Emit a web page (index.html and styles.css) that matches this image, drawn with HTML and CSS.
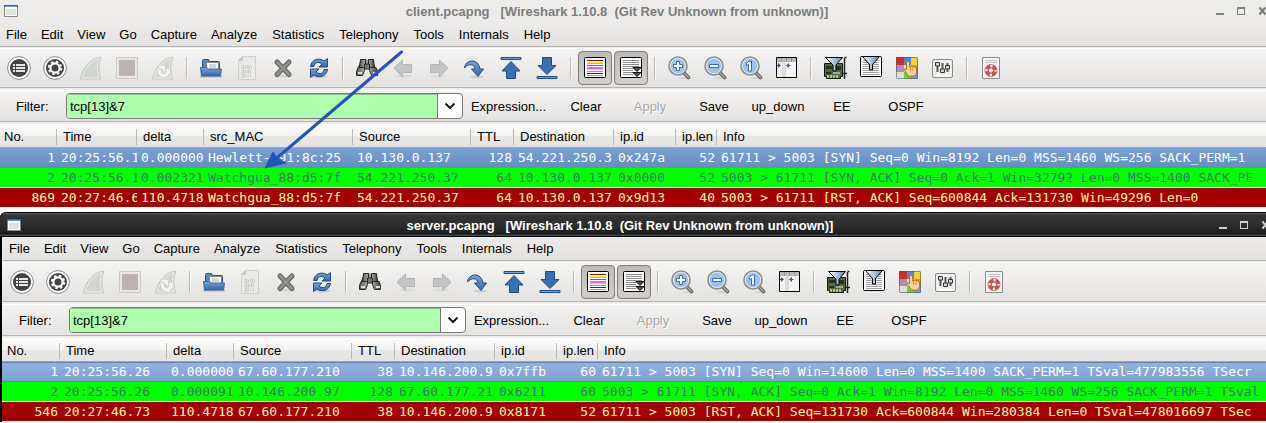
FILE: index.html
```html
<!DOCTYPE html>
<html lang="en">
<head>
<meta charset="utf-8">
<title>Wireshark captures</title>
<link rel="stylesheet" href="styles.css">
</head>
<body>
<svg class="defs" aria-hidden="true">
  <defs>
    <linearGradient id="g-blue" x1="0" y1="0" x2="0" y2="1"><stop offset="0" stop-color="#7ba4d6"/><stop offset="1" stop-color="#3465a4"/></linearGradient>
    <linearGradient id="g-funnel" x1="0" y1="0" x2="1" y2="0"><stop offset="0" stop-color="#fff"/><stop offset="1" stop-color="#5f86b8"/></linearGradient>
    <linearGradient id="g-tube" x1="0" y1="0" x2="1" y2="0"><stop offset="0" stop-color="#555753"/><stop offset=".5" stop-color="#c5c7c2"/><stop offset="1" stop-color="#3c3e3a"/></linearGradient>
    <symbol id="i-app" viewBox="0 0 14 12"><path d="M.5 .5h13v11H.5z" fill="#fff" stroke="#858583"/><path d="M2 4h10v6H2z" fill="#dfe2dc"/><path d="M0 0h14v2H0z" fill="#3a65a3"/><path d="M1 1h12v1H1z" fill="#6d9ad6"/></symbol>
    <symbol id="i-min" viewBox="0 0 8 10"><path d="M0 7h8v2H0z" fill="currentColor"/></symbol>
    <symbol id="i-max" viewBox="0 0 8 10"><path d="M0 1h8v8H0zM1 3v5h6V3z" fill="currentColor" fill-rule="evenodd"/></symbol>
    <symbol id="i-close" viewBox="0 0 10 10"><path d="M1.500 1.500l6 7M7.500 1.500l-6 7" stroke="currentColor" stroke-width="2.200"/></symbol>
    <symbol id="i-list" viewBox="0 0 24 24"><circle cx="12" cy="12" r="11.400" fill="#fff" stroke="#85878a"/><circle cx="12" cy="12" r="9" fill="#414344"/><path d="M6 8h2v2H6zM6 11h2v2H6zM6 14h2v2H6zM9 8h9v2H9zM9 11h9v2H9zM9 14h9v2H9z" fill="#e8e8e8"/></symbol>
    <symbol id="i-gear" viewBox="0 0 24 24"><circle cx="12" cy="12" r="11.400" fill="#fff" stroke="#85878a"/><circle cx="12" cy="12" r="9" fill="#414344"/><circle cx="12" cy="12" r="4.600" fill="none" stroke="#fff" stroke-width="2.200"/><circle cx="12" cy="12" r="6.200" fill="none" stroke="#fff" stroke-width="2" stroke-dasharray="2.600 2.270"/></symbol>
    <symbol id="i-fin" viewBox="0 0 24 24"><path d="M1.500 23C4 12 10 2.500 22 1.200C18.500 8 20 17 21.500 23z" fill="#d0d5ce" stroke="#c6c7c4"/><path d="M3 22C6 12 11 4.500 20 2.500C17.500 9 18.500 17 20 22z" fill="none" stroke="#efefed"/></symbol>
    <symbol id="i-stop" viewBox="0 0 24 24"><path d="M1.500 1.500h21v21h-21z" fill="#e9e8e6" stroke="#cccac8"/><path d="M4 4h16v16H4z" fill="#bdb3b1"/></symbol>
    <symbol id="i-restart" viewBox="0 0 24 24"><use href="#i-fin"/><path d="M9 13.500a4.200 4.200 0 1 0 7-.5" fill="none" stroke="#f4f4f2" stroke-width="2.600"/><path d="M7 10h7v6z" fill="#f4f4f2"/></symbol>
    <symbol id="i-open" viewBox="0 0 24 24"><path d="M1 20h22v1.500H1z" fill="#b9b8b5"/><path d="M3.500 13V4.500q0-1 1-1h5l1 2h9q1 0 1 1V13z" fill="#5c86bf" stroke="#274f88"/><path d="M7.500 6.500h12v7h-12z" fill="#fff" stroke="#888a85"/><path d="M10 9h7M10 11h7" stroke="#a9aca6"/><path d="M1.500 11.500h6l1.500 1.500h13.500l-1 7h-19z" fill="url(#g-blue)" stroke="#3a67a5"/></symbol>
    <symbol id="i-file" viewBox="0 0 24 24"><path d="M3.500 4l4-3.500h13v23h-17z" fill="#e9eae7" stroke="#cfd0cd"/><path d="M3 5h5V0z" fill="#c6c8c4"/><path d="M7 9.500h2v3H7zm3.500 0v3m2-3h2v3h-2zm4 0v3M7 14v3.500m1.500-3.500h2v3h-2zm3.500 0v3m1.500-3h2v3h-2zM7 18.500h2v3H7zm3.500 0v3m2.500-3v3m2.500-3v3" fill="none" stroke="#c9cbc7"/></symbol>
    <symbol id="i-cross" viewBox="0 0 24 24"><ellipse cx="12" cy="20" rx="9" ry="1.500" fill="#d5d4d2"/><path d="M6 6L18 18.500M18 6L6 18.500" stroke="#5d5f5c" stroke-width="5" stroke-linecap="round"/><path d="M6 6L18 18.500M18 6L6 18.500" stroke="#8f918d" stroke-width="3" stroke-linecap="round"/></symbol>
    <symbol id="i-reload" viewBox="0 0 24 24"><ellipse cx="12" cy="21" rx="9" ry="1.500" fill="#cfcecb"/><path d="M3.500 10.500C4.500 3.500 12 1 17 5l3.500-2.500V11h-8.500l3-3C11 5 7.500 6.500 7 10.500z" fill="url(#g-blue)" stroke="#204a87"/><path d="M20.500 13.500C19.500 20.500 12 22.500 7 19l-3.500 2.500V13h8.500l-3 3c4 3 7.500 1.500 8-2.500z" fill="url(#g-blue)" stroke="#204a87"/></symbol>
    <symbol id="i-find" viewBox="0 0 24 24"><path d="M5.500 5h3v-1.500h3V10h1V3.500h3V5h3l1.500 6h-17z" fill="#4b4d49"/><path d="M5.500 3.500h5v9h-6zM13.500 3.500h5l1 9h-6z" fill="url(#g-tube)" stroke="#252724"/><path d="M3 11.500h6.500v3l-2 5H1.500v-4zM21 11.500h-6.500v3l2 5h6v-4z" fill="url(#g-tube)" stroke="#252724"/><path d="M9.500 8h5v5h-5z" fill="#777a74" stroke="#252724"/><path d="M3 16h4v2H3zM18 16h4v2h-4z" fill="#dcded9"/></symbol>
    <symbol id="i-back" viewBox="0 0 24 24"><ellipse cx="13" cy="20" rx="8" ry="1.500" fill="#dcdbd8"/><path d="M3 12l8.500-8v4.500h9v8h-9V21z" fill="#c3c4c3" stroke="#b4b6b5"/></symbol>
    <symbol id="i-fwd" viewBox="0 0 24 24"><ellipse cx="11" cy="20" rx="8" ry="1.500" fill="#dcdbd8"/><path d="M21 12l-8.500-8v4.500h-9v8h9V21z" fill="#c3c4c3" stroke="#b4b6b5"/></symbol>
    <symbol id="i-jump" viewBox="0 0 24 24"><ellipse cx="14" cy="21" rx="7" ry="1.300" fill="#cfcecb"/><path d="M1.500 12C2 3.500 15.500 1.500 17 13h3.500L15 20.500 8.500 13H12C11.500 8 5.500 7 1.500 12z" fill="url(#g-blue)" stroke="#204a87"/></symbol>
    <symbol id="i-top" viewBox="0 0 24 24"><path d="M2 1.500h20v2H2z" fill="#7ba4d6" stroke="#204a87"/><path d="M12 5.500l9 9.500h-4.500v7.500h-9V15H3z" fill="#3a6fb0" stroke="#204a87"/></symbol>
    <symbol id="i-bottom" viewBox="0 0 24 24"><path d="M2 20.500h20v2H2z" fill="#7ba4d6" stroke="#204a87"/><path d="M12 18.500L3 9.500h4.500v-8h9v8H21z" fill="#3a6fb0" stroke="#204a87"/></symbol>
    <symbol id="i-color" viewBox="0 0 24 24"><rect x="1.500" y="1.500" width="21" height="20" rx="1" fill="#fff" stroke="#000"/><g stroke-width="1"><path d="M4 4.500h16" stroke="#8f1010"/><path d="M4 6.500h16" stroke="#f5e642"/><path d="M4 7.500h16" stroke="#70ef50"/><path d="M4 9.500h16" stroke="#5b55dd"/><path d="M4 11.500h16" stroke="#40c8a8"/><path d="M4 12.500h16" stroke="#ee62e4" stroke-width="2"/><path d="M4 15.500h16" stroke="#ee62e4"/><path d="M4 17.500h16" stroke="#7c1010"/><path d="M4 19.500h16" stroke="#37cadf"/></g></symbol>
    <symbol id="i-scroll" viewBox="0 0 24 24"><rect x="1.500" y="1.500" width="21" height="20" rx="1" fill="#fff" stroke="#000"/><path d="M4 4.500h16M4 6.500h16M4 8.500h16M4 10.500h16M4 12.500h10M4 14.500h10M4 16.500h11M4 18.500h10" stroke="#8b8b8b"/><path d="M14 11.500h8l-4 4zM14 16.500h8l-4 4z" fill="#555" stroke="#000"/></symbol>
    <symbol id="i-lens" viewBox="0 0 24 24"><ellipse cx="17" cy="22" rx="6" ry="1.200" fill="#d5d4d1"/><path d="M16 16l5.500 5.500" stroke="#5c5e5a" stroke-width="3.600" stroke-linecap="round"/><path d="M16 16l5.500 5.500" stroke="#a8aaa5" stroke-width="1.600" stroke-linecap="round"/><circle cx="11" cy="10" r="9" fill="#9ebfe8" stroke="#8b8d88" stroke-width="1.600"/><circle cx="11" cy="10" r="7.700" fill="none" stroke="#e4ecf6"/></symbol>
    <symbol id="i-zin" viewBox="0 0 24 24"><use href="#i-lens"/><path d="M9.500 5.500h3v3h3v3h-3v3h-3v-3h-3v-3h3z" fill="#fff" stroke="#3b6dab"/></symbol>
    <symbol id="i-zout" viewBox="0 0 24 24"><use href="#i-lens"/><path d="M6.500 8.500h9v3h-9z" fill="#fff" stroke="#3b6dab"/></symbol>
    <symbol id="i-zone" viewBox="0 0 24 24"><use href="#i-lens"/><path d="M7.500 7.500L10 5h2.500v10h-3V8.500l-2 1z" fill="#fff" stroke="#3b6dab"/></symbol>
    <symbol id="i-resize" viewBox="0 0 24 24"><path d="M1.500 1.500h20v20h-20z" fill="#f4f4f2" stroke="#000"/><path d="M2 2h19v4H2z" fill="#bababa"/><path d="M7 6h4v15H7z" fill="#deddda"/><path d="M6.500 2v4M11.500 2v4M16.500 2v4" stroke="#929292"/><path d="M2 9.500h3M12.500 9.500h3" stroke="#34587e"/><path d="M3 7l3 2.500L3 12zM14 7v5l-3-2.500z" fill="#34587e"/></symbol>
    <symbol id="i-capfilter" viewBox="0 0 24 24"><path d="M1.500 7.500h18v13h-2v2h-14v-2h-2z" fill="#536849" stroke="#10180d"/><path d="M4 20.500h12" stroke="#d7c679" stroke-width="2.500" stroke-dasharray="2 1"/><path d="M3 10h6v3H3zM13 10h5v4h-5zM3 16h5v2H3z" fill="#26311f"/><path d="M10 16h7v2h-7z" fill="#9aaf82"/><path d="M21.500 2v21M21.500 1.500h2M20 17.500h4" stroke="#20221f" stroke-width="1.500"/><path d="M2.500 1.500h17L13 9v6h-3V9z" fill="url(#g-funnel)" stroke="#000"/></symbol>
    <symbol id="i-dispfilter" viewBox="0 0 24 24"><rect x="1.500" y=".5" width="21" height="20" rx="1" fill="#fff" stroke="#000"/><path d="M4 4.500h16M4 6.500h16M4 8.500h16M4 10.500h16M4 12.500h16M4 14.500h16M4 16.500h16M4 18.500h16" stroke="#a0a0a0"/><path d="M3.500 .5h17L13.500 8.500v5.500h-3V8.500z" fill="url(#g-funnel)" stroke="#000"/></symbol>
    <symbol id="i-palette" viewBox="0 0 24 24"><path d="M1 1h8v8H1z" fill="#d42a2a"/><path d="M9 1h7v8H9z" fill="#5487c4"/><path d="M16 1h7v8h-7z" fill="#efd53a"/><path d="M1 9h8v7H1z" fill="#b28bb4"/><path d="M9 9h7v7H9z" fill="#e4e4df"/><path d="M16 9h7v7h-7z" fill="#e98a35"/><path d="M1 16h8v7H1z" fill="#dedfdc"/><path d="M9 16h7v7H9z" fill="#75cc37"/><path d="M16 16h7v7h-7z" fill="#6c9fda"/><rect x="1.500" y="1.500" width="21" height="21" rx="1" fill="none" stroke="#555" stroke-opacity=".6"/><path d="M11.500 6q1.500-1.500 3 0v5l1.500-1 1.500 1 1.500-.5 1 1 1 0 .5 1.500v4l-2 3h-6L10 15q-1.500-2.500 0-2.500l1.500 1z" fill="#f8d397" stroke="#b47224"/><path d="M15.500 11.500v3M18 12v3" stroke="#c98a3e"/></symbol>
    <symbol id="i-prefs" viewBox="0 0 24 24"><rect x="1.500" y="3.500" width="20" height="18" rx="1.500" fill="#eeefec" stroke="#888a85"/><path d="M3 19h17v1.500H3z" fill="#fff"/><path d="M6.500 7v9M11.500 7v9M16.500 7v9" stroke="#555753" stroke-width="2"/><path d="M4.500 6.500h4v3.500h-4zM9.500 13h4v3.500h-4zM14.500 9.500h4V13h-4z" fill="#d3d5d0" stroke="#2e3436"/></symbol>
    <symbol id="i-help" viewBox="0 0 24 24"><path d="M3.500 1.500h17v21h-17z" fill="#f4f4f2" stroke="#898b86"/><path d="M6 4.500h12M6 6.500h12" stroke="#c2c3c0"/><circle cx="12" cy="14.500" r="4.500" fill="none" stroke="#f2f2f0" stroke-width="3"/><circle cx="12" cy="14.500" r="4.500" fill="none" stroke="#d44a4a" stroke-width="2.800" stroke-dasharray="4.800 2.270" stroke-dashoffset="-1.100"/><circle cx="12" cy="14.500" r="2.700" fill="#f6f6f4" stroke="#a33"/><circle cx="12" cy="14.500" r="6" fill="none" stroke="#b55" stroke-width=".8"/></symbol>
    <symbol id="i-down" viewBox="0 0 12 8"><path d="M1.500 1.500L6 6l4.500-4.500" fill="none" stroke="#1a1a1a" stroke-width="2"/></symbol>
  </defs>
</svg>

<section class="window client">
  <header class="top">
    <div class="titlebar">
      <svg class="app"><use href="#i-app"/></svg>
      <h1 class="title">client.pcapng   [Wireshark 1.10.8  (Git Rev Unknown from unknown)]</h1>
      <button class="ctl" aria-label="Minimize"><svg><use href="#i-min"/></svg></button>
      <button class="ctl" aria-label="Maximize"><svg><use href="#i-max"/></svg></button>
      <button class="ctl close" aria-label="Close"><svg><use href="#i-close"/></svg></button>
    </div>
    <nav class="menu">
      <button>File</button><button>Edit</button><button>View</button><button>Go</button><button>Capture</button><button>Analyze</button><button>Statistics</button><button>Telephony</button><button>Tools</button><button>Internals</button><button>Help</button>
    </nav>
  </header>
  <div class="toolbar">
    <button aria-label="Interfaces"><svg><use href="#i-list"/></svg></button>
    <button aria-label="Options"><svg><use href="#i-gear"/></svg></button>
    <button aria-label="Start" disabled><svg><use href="#i-fin"/></svg></button>
    <button aria-label="Stop" disabled><svg><use href="#i-stop"/></svg></button>
    <button aria-label="Restart" disabled><svg><use href="#i-restart"/></svg></button>
    <span class="sep"></span>
    <button aria-label="Open"><svg><use href="#i-open"/></svg></button>
    <button aria-label="Save" disabled><svg><use href="#i-file"/></svg></button>
    <button aria-label="Close file"><svg><use href="#i-cross"/></svg></button>
    <button aria-label="Reload"><svg><use href="#i-reload"/></svg></button>
    <span class="sep"></span>
    <button aria-label="Find"><svg><use href="#i-find"/></svg></button>
    <button aria-label="Back" disabled><svg><use href="#i-back"/></svg></button>
    <button aria-label="Forward" disabled><svg><use href="#i-fwd"/></svg></button>
    <button aria-label="Go to packet"><svg><use href="#i-jump"/></svg></button>
    <button aria-label="First packet"><svg><use href="#i-top"/></svg></button>
    <button aria-label="Last packet"><svg><use href="#i-bottom"/></svg></button>
    <span class="sep"></span>
    <button class="on" aria-label="Colorize" aria-pressed="true"><svg><use href="#i-color"/></svg></button>
    <button class="on" aria-label="Auto scroll" aria-pressed="true"><svg><use href="#i-scroll"/></svg></button>
    <span class="sep"></span>
    <button aria-label="Zoom in"><svg><use href="#i-zin"/></svg></button>
    <button aria-label="Zoom out"><svg><use href="#i-zout"/></svg></button>
    <button aria-label="Normal size"><svg><use href="#i-zone"/></svg></button>
    <button aria-label="Resize columns"><svg><use href="#i-resize"/></svg></button>
    <span class="sep"></span>
    <button aria-label="Capture filters"><svg><use href="#i-capfilter"/></svg></button>
    <button aria-label="Display filters"><svg><use href="#i-dispfilter"/></svg></button>
    <button aria-label="Coloring rules"><svg><use href="#i-palette"/></svg></button>
    <button aria-label="Preferences"><svg><use href="#i-prefs"/></svg></button>
    <span class="sep"></span>
    <button aria-label="Help contents"><svg><use href="#i-help"/></svg></button>
  </div>
  <form class="filter">
    <label for="filter-client">Filter:</label>
    <div class="combo"><input id="filter-client" type="text" value="tcp[13]&amp;7"><button type="button" aria-label="Recent filters"><svg><use href="#i-down"/></svg></button></div>
    <button type="button" class="action expr">Expression...</button><button type="button" class="action">Clear</button><button type="button" class="action" disabled>Apply</button><button type="button" class="action">Save</button><button type="button" class="action">up_down</button><button type="button" class="action">EE</button><button type="button" class="action">OSPF</button>
  </form>
  <table class="packets">
    <colgroup><col class="c-no"><col class="c-time"><col class="c-delta"><col class="c-mac"><col class="c-src"><col class="c-ttl"><col class="c-dst"><col class="c-id"><col class="c-len"><col></colgroup>
    <thead><tr><th>No.</th><th>Time</th><th>delta</th><th>src_MAC</th><th>Source</th><th>TTL</th><th>Destination</th><th>ip.id</th><th>ip.len</th><th>Info</th></tr></thead>
    <tbody>
      <tr class="selected"><td class="num">1</td><td>20:25:56.1</td><td>0.000000</td><td>Hewlett-_91:8c:25</td><td>10.130.0.137</td><td class="num">128</td><td>54.221.250.3</td><td>0x247a</td><td class="num">52</td><td>61711 &gt; 5003 [SYN] Seq=0 Win=8192 Len=0 MSS=1460 WS=256 SACK_PERM=1</td></tr>
      <tr class="syn"><td class="num">2</td><td>20:25:56.1</td><td>0.002321</td><td>Watchgua_88:d5:7f</td><td>54.221.250.37</td><td class="num">64</td><td>10.130.0.137</td><td>0x0000</td><td class="num">52</td><td>5003 &gt; 61711 [SYN, ACK] Seq=0 Ack=1 Win=32792 Len=0 MSS=1400 SACK_PE</td></tr>
      <tr class="rst"><td class="num">869</td><td>20:27:46.6</td><td>110.4718</td><td>Watchgua_88:d5:7f</td><td>54.221.250.37</td><td class="num">64</td><td>10.130.0.137</td><td>0x9d13</td><td class="num">40</td><td>5003 &gt; 61711 [RST, ACK] Seq=600844 Ack=131730 Win=49296 Len=0</td></tr>
    </tbody>
  </table>
</section>

<section class="window server">
  <header class="top">
    <div class="titlebar">
      <svg class="app"><use href="#i-app"/></svg>
      <h1 class="title">server.pcapng   [Wireshark 1.10.8  (Git Rev Unknown from unknown)]</h1>
      <button class="ctl" aria-label="Minimize"><svg><use href="#i-min"/></svg></button>
      <button class="ctl" aria-label="Maximize"><svg><use href="#i-max"/></svg></button>
      <button class="ctl close" aria-label="Close"><svg><use href="#i-close"/></svg></button>
    </div>
    <nav class="menu">
      <button>File</button><button>Edit</button><button>View</button><button>Go</button><button>Capture</button><button>Analyze</button><button>Statistics</button><button>Telephony</button><button>Tools</button><button>Internals</button><button>Help</button>
    </nav>
  </header>
  <div class="toolbar">
    <button aria-label="Interfaces"><svg><use href="#i-list"/></svg></button>
    <button aria-label="Options"><svg><use href="#i-gear"/></svg></button>
    <button aria-label="Start" disabled><svg><use href="#i-fin"/></svg></button>
    <button aria-label="Stop" disabled><svg><use href="#i-stop"/></svg></button>
    <button aria-label="Restart" disabled><svg><use href="#i-restart"/></svg></button>
    <span class="sep"></span>
    <button aria-label="Open"><svg><use href="#i-open"/></svg></button>
    <button aria-label="Save" disabled><svg><use href="#i-file"/></svg></button>
    <button aria-label="Close file"><svg><use href="#i-cross"/></svg></button>
    <button aria-label="Reload"><svg><use href="#i-reload"/></svg></button>
    <span class="sep"></span>
    <button aria-label="Find"><svg><use href="#i-find"/></svg></button>
    <button aria-label="Back" disabled><svg><use href="#i-back"/></svg></button>
    <button aria-label="Forward" disabled><svg><use href="#i-fwd"/></svg></button>
    <button aria-label="Go to packet"><svg><use href="#i-jump"/></svg></button>
    <button aria-label="First packet"><svg><use href="#i-top"/></svg></button>
    <button aria-label="Last packet"><svg><use href="#i-bottom"/></svg></button>
    <span class="sep"></span>
    <button class="on" aria-label="Colorize" aria-pressed="true"><svg><use href="#i-color"/></svg></button>
    <button class="on" aria-label="Auto scroll" aria-pressed="true"><svg><use href="#i-scroll"/></svg></button>
    <span class="sep"></span>
    <button aria-label="Zoom in"><svg><use href="#i-zin"/></svg></button>
    <button aria-label="Zoom out"><svg><use href="#i-zout"/></svg></button>
    <button aria-label="Normal size"><svg><use href="#i-zone"/></svg></button>
    <button aria-label="Resize columns"><svg><use href="#i-resize"/></svg></button>
    <span class="sep"></span>
    <button aria-label="Capture filters"><svg><use href="#i-capfilter"/></svg></button>
    <button aria-label="Display filters"><svg><use href="#i-dispfilter"/></svg></button>
    <button aria-label="Coloring rules"><svg><use href="#i-palette"/></svg></button>
    <button aria-label="Preferences"><svg><use href="#i-prefs"/></svg></button>
    <span class="sep"></span>
    <button aria-label="Help contents"><svg><use href="#i-help"/></svg></button>
  </div>
  <form class="filter">
    <label for="filter-server">Filter:</label>
    <div class="combo"><input id="filter-server" type="text" value="tcp[13]&amp;7"><button type="button" aria-label="Recent filters"><svg><use href="#i-down"/></svg></button></div>
    <button type="button" class="action expr">Expression...</button><button type="button" class="action">Clear</button><button type="button" class="action" disabled>Apply</button><button type="button" class="action">Save</button><button type="button" class="action">up_down</button><button type="button" class="action">EE</button><button type="button" class="action">OSPF</button>
  </form>
  <table class="packets">
    <colgroup><col class="c-no"><col class="c-time"><col class="c-delta"><col class="c-src"><col class="c-ttl"><col class="c-dst"><col class="c-id"><col class="c-len"><col></colgroup>
    <thead><tr><th>No.</th><th>Time</th><th>delta</th><th>Source</th><th>TTL</th><th>Destination</th><th>ip.id</th><th>ip.len</th><th>Info</th></tr></thead>
    <tbody>
      <tr class="selected"><td class="num">1</td><td>20:25:56.26</td><td>0.000000</td><td>67.60.177.210</td><td class="num">38</td><td>10.146.200.9</td><td>0x7ffb</td><td class="num">60</td><td>61711 &gt; 5003 [SYN] Seq=0 Win=14600 Len=0 MSS=1400 SACK_PERM=1 TSval=477983556 TSecr</td></tr>
      <tr class="syn"><td class="num">2</td><td>20:25:56.26</td><td>0.000091</td><td>10.146.200.97</td><td class="num">128</td><td>67.60.177.21</td><td>0x6211</td><td class="num">60</td><td>5003 &gt; 61711 [SYN, ACK] Seq=0 Ack=1 Win=8192 Len=0 MSS=1460 WS=256 SACK_PERM=1 TSval</td></tr>
      <tr class="rst"><td class="num">546</td><td>20:27:46.73</td><td>110.4718</td><td>67.60.177.210</td><td class="num">38</td><td>10.146.200.9</td><td>0x8171</td><td class="num">52</td><td>61711 &gt; 5003 [RST, ACK] Seq=131730 Ack=600844 Win=280384 Len=0 TSval=478016697 TSec</td></tr>
    </tbody>
  </table>
</section>

<svg class="arrow" viewBox="0 0 140 120" aria-hidden="true"><path d="M137.500 3L14 108" stroke="#2753b8" stroke-width="3" stroke-linecap="round"/><path d="M1 119L9 103l4 6 9 5z" fill="#2753b8" stroke="#2753b8" stroke-linejoin="round"/></svg>
</body>
</html>
```

FILE: styles.css
```css
* { box-sizing: border-box; }
body {
  margin: 0;
  position: relative;
  overflow: hidden;
  background: #fff;
  color: #000;
  font: 13px/20px "Liberation Sans", Arial, sans-serif;
}
button, input { font: inherit; color: inherit; margin: 0; }
button { border: 0; padding: 0; background: none; white-space: nowrap; }
svg { display: block; flex: none; }
.defs { position: absolute; width: 0; height: 0; }

.window { background: #eeedeb; }
.top { border-bottom: 1px solid #b5b3b0; background: linear-gradient(#eeedec, #ecebea 50%, #e3e2e0); }

.titlebar { display: flex; height: 23px; padding: 1px 0 0 4px; color: #7c7c7a; }
.titlebar .app { width: 14px; height: 12px; margin-top: 4px; }
.title { flex: 1; margin: 0; font-size: 13px; line-height: 22px; font-weight: bold; text-align: center; white-space: pre; }
.ctl { flex: none; height: 10px; margin: 5px 13px 0 0; }
.ctl svg { width: 8px; height: 10px; }
.ctl.close { margin-right: -2px; }
.ctl.close svg { width: 10px; }

.menu { display: flex; gap: 1px; height: 23px; }
.menu button { padding: 1px 7px 0 6px; line-height: 22px; }
.menu button:nth-child(n+7) { padding-left: 7px; }

.toolbar {
  display: flex;
  height: 40px;
  margin-top: 1px;
  padding: 2px 1px 0;
  border-top: 1px solid #fff;
  border-bottom: 1px solid #b5b3b0;
  background: linear-gradient(#f5f4f3, #e4e2e0);
}
.toolbar button {
  flex: none;
  display: grid;
  place-items: center;
  width: 34px;
  height: 34px;
  margin: 0 1px;
  border-radius: 4px;
}
.toolbar svg { width: 24px; height: 24px; }
.toolbar .on { border: 1px solid #85827e; background: linear-gradient(#bfbbb8, #d3d0cd); box-shadow: inset 0 0 1px #8f8c88; }
.toolbar .sep { flex: none; width: 2px; height: 22px; margin: 6px 5px; border-left: 1px solid #bbb9b6; border-right: 1px solid #fafaf9; }

.filter {
  display: flex;
  align-items: flex-start;
  height: 32px;
  margin-top: 2px;
  padding: 2px 0 0 16px;
  border-top: 1px solid #fff;
  border-bottom: 1px solid #b5b3b0;
  background: linear-gradient(#f4f3f2, #e5e3e1);
}
.filter label { width: 50px; line-height: 27px; }
.combo { display: flex; width: 397px; height: 26px; border: 1px solid #7c7975; border-radius: 4px; background: #fff; overflow: hidden; }
.combo input { flex: 1; min-width: 0; border: 0; border-right: 1px solid #7c7975; padding: 1px 3px 0; background: #afffaf; outline: 0; box-shadow: inset 0 1px 0 #8fbf8f; }
.combo button { display: grid; place-items: center; width: 24px; }
.combo svg { width: 12px; height: 8px; }
.action { min-width: 64px; line-height: 27px; text-align: center; }
.action.expr { width: 91px; }
.action:disabled { color: #a9a7a4; text-shadow: 1px 1px #fff; }

.packets { width: 100%; margin-top: 2px; table-layout: fixed; border-collapse: separate; border-spacing: 0; }
.c-no { width: 57px; }
.c-time { width: 80px; }
.c-delta { width: 67px; }
.c-mac { width: 149px; }
.c-src { width: 118px; }
.c-ttl { width: 43px; }
.c-dst { width: 100px; }
.c-id { width: 62px; }
.c-len { width: 41px; }
.packets th {
  height: 24px;
  padding: 1px 0 0 6px;
  border-top: 1px solid #fff;
  border-bottom: 1px solid #a9a6a2;
  background: linear-gradient(#bbb9b6, #bbb9b6) right 4px / 1px 16px no-repeat, linear-gradient(#fbfbfa, #f3f2f1 50%, #e9e7e5 52%, #e6e4e2);
  font-weight: normal;
  line-height: 20px;
  text-align: left;
  white-space: nowrap;
}
.packets th:first-child { padding-left: 4px; }
.packets th:last-child { background: linear-gradient(#fbfbfa, #f3f2f1 50%, #e9e7e5 52%, #e6e4e2); }
.packets td {
  height: 20px;
  padding: 0 0 0 4px;
  border-bottom: 1px solid #fff;
  overflow: hidden;
  white-space: nowrap;
  font: 13px/19px "DejaVu Sans Mono", monospace;
}
.packets .num { padding: 0 2px 0 0; text-align: right; }
.selected td { color: #fff; background: linear-gradient(#7ca0d3, #668dc3); border-bottom-color: #668dc3; }
.syn td { color: #456f70; background: #0f0; }
.rst td { color: #fffc9c; background: #a40000; }

.server { margin: 4px -3px 0 0; padding-left: 2px; border-radius: 6px 0 0 0; background: linear-gradient(#000, #000) left / 2px 100% no-repeat, #eeedeb; }
.server .titlebar {
  height: 25px;
  margin-left: -2px;
  padding: 2px 0 0 7px;
  border-top: 1px solid #000;
  border-bottom: 1px solid #000;
  border-radius: 6px 0 0 0;
  background: linear-gradient(#666, #333 2px, #2e2e2e 50%, #1c1c1c 90%, #41536a);
  color: #fff;
}
.server .ctl { color: #cfcfcd; }
.server .menu { padding-left: 1px; }
.server .toolbar { padding-left: 2px; }
.server .filter { padding-left: 17px; }
.server .c-no { width: 58px; }
.server .c-time { width: 107px; }
.server .packets th:first-child { padding-left: 5px; }
.server .selected td { background: linear-gradient(#95b2df, #7ba0d0); border-bottom-color: #5f84b8; box-shadow: inset 0 1px #5f84b8; }

/* Annotation drawn over the client capture */
.arrow { position: absolute; left: 264px; top: 49px; width: 140px; height: 120px; pointer-events: none; }
```
